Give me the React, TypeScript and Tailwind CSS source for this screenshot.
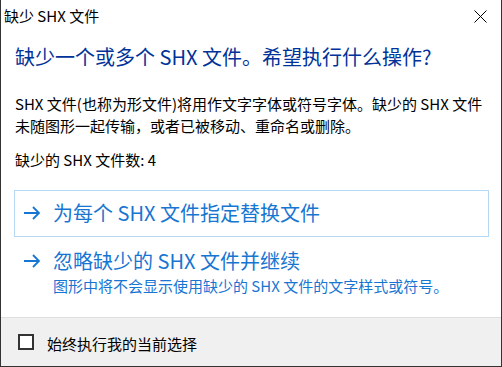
import React from 'react';

const FONT = '[font-family:"Noto_Sans_CJK_SC","Noto_Sans",sans-serif]';

function Arrow() {
  return (
    <svg width="18" height="14" viewBox="0 0 18 14" className="shrink-0">
      <path d="M1 7 H16 M10 1 L16 7 L10 13" fill="none" stroke="#1776d2" strokeWidth="1.8" />
    </svg>
  );
}

interface OptionProps {
  title: string;
  note?: string;
  active?: boolean;
}

function CommandLink({ title, note, active }: OptionProps) {
  return (
    <div
      className={
        'border pl-[8px] pt-[8px] pb-[9px] ' +
        (active ? 'border-[#b5d8f5]' : 'border-transparent')
      }
    >
      <div className="flex items-center h-[28px] gap-[12px]">
        <Arrow />
        <span className="text-[20px] leading-[28px] text-[#1776d2] whitespace-nowrap">{title}</span>
      </div>
      {note && (
        <div className="pl-[30px] mt-[1px] text-[15px] leading-[20px] text-[#1776d2] whitespace-nowrap">
          {note}
        </div>
      )}
    </div>
  );
}

export default function App() {
  return (
    <div
      className={`w-[502px] h-[367px] bg-white border-l border-r border-b border-[#333333] flex flex-col overflow-hidden ${FONT}`}
    >
      {/* Title bar */}
      <div className="h-[31px] flex items-center justify-between pl-[3px] shrink-0">
        <span className="text-[15px] leading-[20px] text-black">缺少 SHX 文件</span>
        <svg width="13" height="13" viewBox="0 0 13 13" className="mr-[14px] mt-[1px]">
          <path d="M0.5 0.5 L12.5 12.5 M12.5 0.5 L0.5 12.5" stroke="#000" strokeWidth="1" />
        </svg>
      </div>

      {/* Content */}
      <div className="flex-1 pl-[13px] pr-[12px]">
        <h1 className="pl-[1px] mt-[12px] text-[20px] leading-[28px] font-normal text-[#003399] whitespace-nowrap">
          缺少一个或多个 SHX 文件。希望执行什么操作?
        </h1>
        <p className="pl-[1px] mt-[22px] text-[15px] leading-[22px] text-black whitespace-nowrap">
          SHX 文件(也称为形文件)将用作文字字体或符号字体。缺少的 SHX 文件
          <br />
          未随图形一起传输，或者已被移动、重命名或删除。
        </p>
        <p className="pl-[1px] mt-[12px] text-[15px] leading-[22px] text-black">缺少的 SHX 文件数: 4</p>

        <div className="mt-[19px] flex flex-col gap-[1px]">
          <CommandLink title="为每个 SHX 文件指定替换文件" active />
          <CommandLink
            title="忽略缺少的 SHX 文件并继续"
            note="图形中将不会显示使用缺少的 SHX 文件的文字样式或符号。"
          />
        </div>
      </div>

      {/* Footer */}
      <div className="h-[49px] shrink-0 bg-[#f0f0f0] border-t border-[#dfdfdf] flex items-center pl-[17px] gap-[13px]">
        <div className="w-[16px] h-[16px] border-2 border-[#333333] bg-white" />
        <span className="text-[15px] leading-[20px] text-black mt-[4px]">始终执行我的当前选择</span>
      </div>
    </div>
  );
}
